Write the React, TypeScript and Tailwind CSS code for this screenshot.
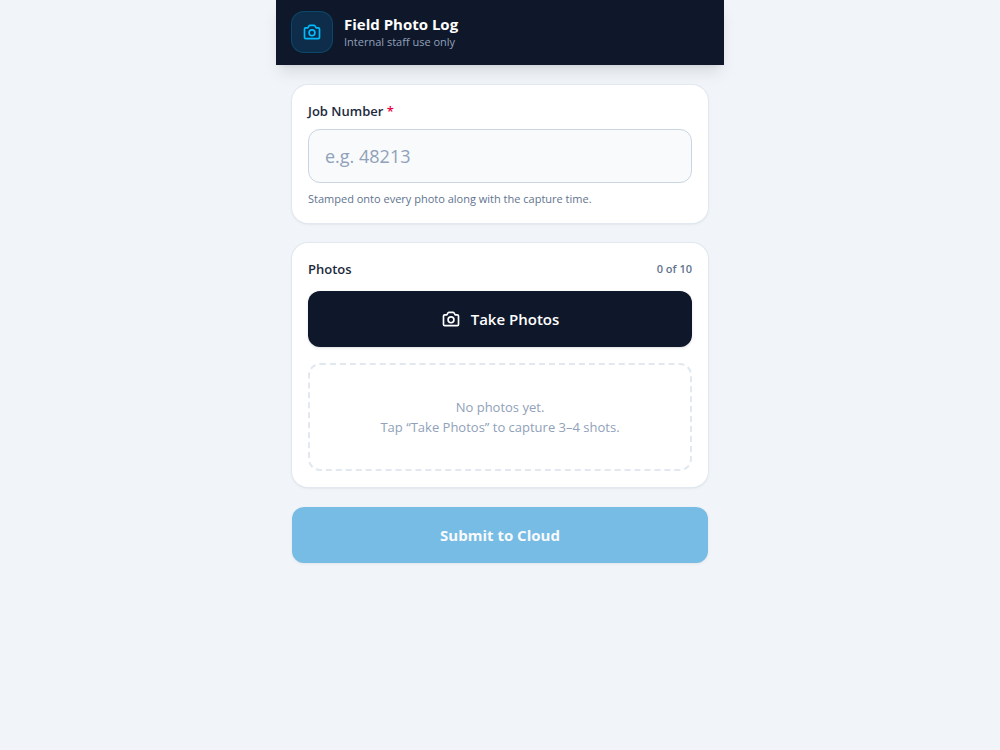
import React, { useState } from 'react';

const MAX_PHOTOS = 10;

function CameraIcon() {
  return (
    <svg
      className="h-5 w-5"
      viewBox="0 0 24 24"
      fill="none"
      stroke="currentColor"
      strokeWidth={2}
      strokeLinecap="round"
      strokeLinejoin="round"
      aria-hidden="true"
    >
      <path d="M3 8.5A1.5 1.5 0 014.5 7H7l1.4-2.3A1.5 1.5 0 019.7 4h4.6a1.5 1.5 0 011.3.7L17 7h2.5A1.5 1.5 0 0121 8.5v10a1.5 1.5 0 01-1.5 1.5h-15A1.5 1.5 0 013 18.5v-10z" />
      <circle cx="12" cy="13" r="3.5" />
    </svg>
  );
}

function Card({ children }: { children: React.ReactNode }) {
  return <section className="rounded-2xl bg-white p-4 shadow-sm ring-1 ring-slate-200">{children}</section>;
}

function App() {
  const [jobNumber, setJobNumber] = useState('');
  const photoCount = 0;
  const canSubmit = jobNumber.trim() !== '' && photoCount > 0;

  return (
    <div className="min-h-screen bg-slate-100 font-['Segoe_UI','Open_Sans',sans-serif] text-slate-900">
      <div className="mx-auto max-w-md">
        <header className="flex items-center gap-3 border-b border-slate-900 bg-slate-900 px-4 py-3 text-white shadow-lg">
          <div className="flex h-10 w-10 items-center justify-center rounded-xl bg-sky-500/15 text-sky-400 ring-1 ring-sky-400/30">
            <CameraIcon />
          </div>
          <div>
            <h1 className="text-[15px] leading-5 font-bold">Field Photo Log</h1>
            <p className="text-[11px] leading-4 text-slate-400">Internal staff use only</p>
          </div>
        </header>

        <main className="space-y-5 px-4 py-5">
          <Card>
            <label htmlFor="job-number" className="mb-2 block text-[13px] leading-5 font-semibold text-slate-800">
              Job Number <span className="text-rose-600">*</span>
            </label>
            <input
              id="job-number"
              type="text"
              inputMode="numeric"
              placeholder="e.g. 48213"
              value={jobNumber}
              onChange={(e) => setJobNumber(e.target.value)}
              className="block w-full rounded-xl border border-slate-300 bg-slate-50 px-4 py-3 text-lg placeholder:text-slate-400 focus:border-sky-500 focus:outline-none"
            />
            <p className="mt-2 text-[11px] leading-4 text-slate-500">
              Stamped onto every photo along with the capture time.
            </p>
          </Card>

          <Card>
            <div className="mb-3 flex items-center justify-between">
              <h2 className="text-[13px] leading-5 font-semibold text-slate-800">Photos</h2>
              <span className="text-[11px] leading-4 font-semibold text-slate-500">
                {photoCount} of {MAX_PHOTOS}
              </span>
            </div>
            <button
              type="button"
              className="flex h-14 w-full items-center justify-center gap-2.5 rounded-xl bg-slate-900 text-[15px] font-semibold text-white shadow-sm"
            >
              <CameraIcon />
              Take Photos
            </button>
            <div className="mt-4 rounded-xl border-2 border-dashed border-slate-200 px-4 py-8 text-center text-[13px] leading-5 text-slate-400">
              <p>No photos yet.</p>
              <p>Tap “Take Photos” to capture 3–4 shots.</p>
            </div>
          </Card>

          <button
            type="button"
            disabled={!canSubmit}
            className="h-14 w-full rounded-xl bg-sky-600 text-[15px] font-bold text-white shadow-sm disabled:opacity-50"
          >
            Submit to Cloud
          </button>
        </main>
      </div>
    </div>
  );
}

export default App;
